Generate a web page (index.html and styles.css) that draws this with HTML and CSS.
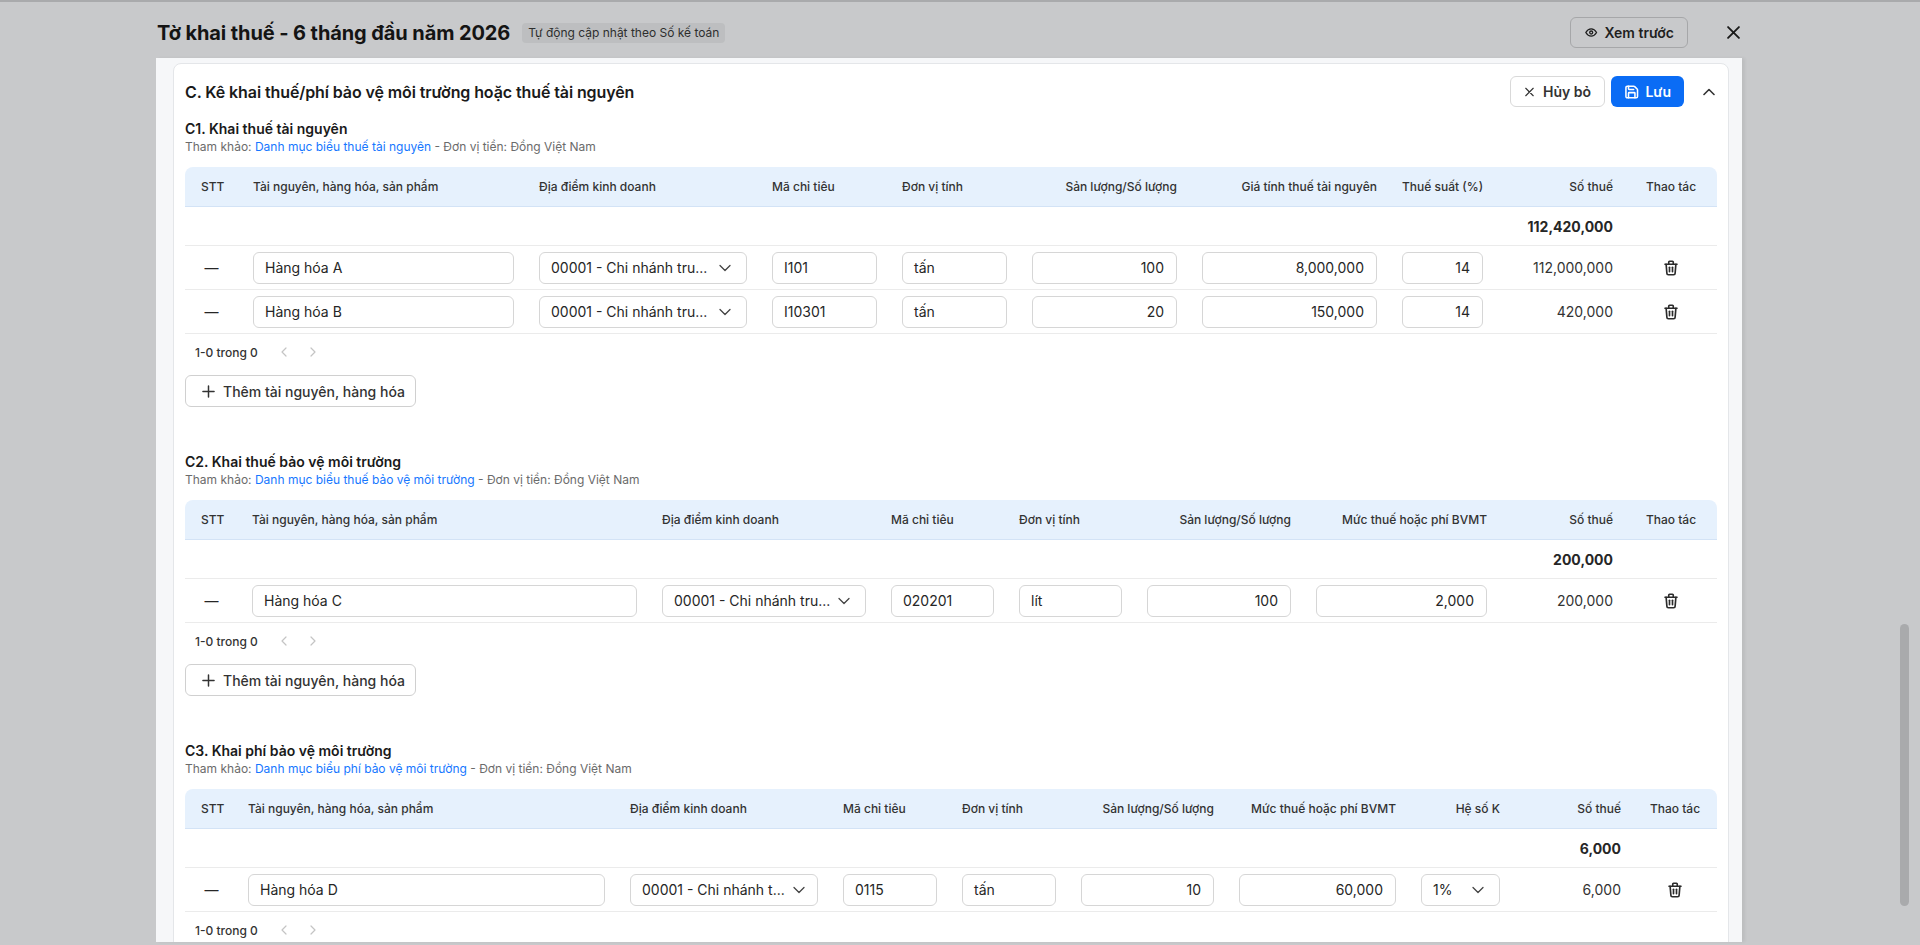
FILE: index.html
```html
<!DOCTYPE html>
<html lang="vi">
<head>
<meta charset="utf-8">
<title>Tờ khai thuế</title>
<link rel="stylesheet" href="styles.css">
</head>
<body>
<div class="modal">
  <header class="modal-head">
    <h1 class="modal-title">Tờ khai thuế - 6 tháng đầu năm 2026</h1>
    <span class="badge">Tự động cập nhật theo Số kế toán</span>
    <div class="spacer"></div>
    <button class="btn btn-ghost">
      <svg class="ic-eye" viewBox="0 0 24 24" fill="none" stroke="currentColor" stroke-width="2.2" stroke-linecap="round" stroke-linejoin="round"><path d="M9.5 12a2.5 2.5 0 1 0 5 0a2.5 2.5 0 0 0 -5 0"/><path d="M21 12c-2.4 4 -5.4 6 -9 6c-3.6 0 -6.6 -2 -9 -6c2.4 -4 5.4 -6 9 -6c3.6 0 6.6 2 9 6"/></svg>
      <span>Xem trước</span>
    </button>
    <button class="close-btn" aria-label="Đóng">
      <svg viewBox="0 0 12 12" width="13" height="13" fill="none" stroke="#1a1a1a" stroke-width="1.7" stroke-linecap="round"><path d="M1 1l10 10M11 1L1 11"/></svg>
    </button>
  </header>

  <div class="panel">
    <section class="card">
      <div class="card-head">
        <h2 class="card-title">C. Kê khai thuế/phí bảo vệ môi trường hoặc thuế tài nguyên</h2>
        <div class="card-actions">
          <button class="btn btn-default">
            <svg viewBox="0 0 12 12" width="12" height="12" fill="none" stroke="currentColor" stroke-width="1.5" stroke-linecap="round"><path d="M1 1l10 10M11 1L1 11"/></svg>
            <span>Hủy bỏ</span>
          </button>
          <button class="btn btn-primary">
            <svg class="ic16" viewBox="0 0 24 24" fill="none" stroke="currentColor" stroke-width="2.4" stroke-linecap="round" stroke-linejoin="round"><path d="M15.2 3a2 2 0 0 1 1.4.6l3.8 3.8a2 2 0 0 1 .6 1.4V19a2 2 0 0 1-2 2H5a2 2 0 0 1-2-2V5a2 2 0 0 1 2-2z"/><path d="M17 21v-7a1 1 0 0 0-1-1H8a1 1 0 0 0-1 1v7"/><path d="M7 3v4a1 1 0 0 0 1 1h7"/></svg>
            <span>Lưu</span>
          </button>
          <button class="collapse-btn" aria-label="Thu gọn">
            <svg viewBox="0 0 12 8" width="12" height="8" fill="none" stroke="#333" stroke-width="1.6" stroke-linecap="round" stroke-linejoin="round"><path d="M1 6.5L6 1.5l5 5"/></svg>
          </button>
        </div>
      </div>

      <!-- C1 -->
      <div class="sub">
        <h3 class="sub-title">C1. Khai thuế tài nguyên</h3>
        <p class="sub-ref">Tham khảo: <a class="link">Danh mục biểu thuế tài nguyên</a> - Đơn vị tiền: Đồng Việt Nam</p>
        <div class="tbl tbl-c1">
          <div class="tr th">
            <div>STT</div>
            <div>Tài nguyên, hàng hóa, sản phẩm</div>
            <div>Địa điểm kinh doanh</div>
            <div>Mã chỉ tiêu</div>
            <div>Đơn vị tính</div>
            <div class="r">Sản lượng/Số lượng</div>
            <div class="r">Giá tính thuế tài nguyên</div>
            <div class="r">Thuế suất (%)</div>
            <div class="r">Số thuế</div>
            <div class="c">Thao tác</div>
          </div>
          <div class="tr total">
            <div></div><div></div><div></div><div></div><div></div><div></div><div></div><div></div>
            <div class="r">112,420,000</div><div></div>
          </div>
          <div class="tr td">
            <div class="dash">—</div>
            <div class="inp">Hàng hóa A</div>
            <div class="sel"><span class="sel-text">00001 - Chi nhánh tru...</span><svg class="chev" viewBox="0 0 12 8" fill="none" stroke="#444" stroke-width="1.3" stroke-linecap="round" stroke-linejoin="round"><path d="M1 1.5l5 5l5-5"/></svg></div>
            <div class="inp">I101</div>
            <div class="inp">tấn</div>
            <div class="inp r">100</div>
            <div class="inp r">8,000,000</div>
            <div class="inp r">14</div>
            <div class="r num">112,000,000</div>
            <div class="c"><svg class="trash" viewBox="0 0 24 24" fill="none" stroke="#2b2b2b" stroke-width="2.2" stroke-linecap="round" stroke-linejoin="round"><path d="M4 7h16"/><path d="M10 11v6"/><path d="M14 11v6"/><path d="M5.5 7l1 12a2 2 0 0 0 2 2h7a2 2 0 0 0 2-2l1-12"/><path d="M9 7V4a1 1 0 0 1 1-1h4a1 1 0 0 1 1 1v3"/></svg></div>
          </div>
          <div class="tr td">
            <div class="dash">—</div>
            <div class="inp">Hàng hóa B</div>
            <div class="sel"><span class="sel-text">00001 - Chi nhánh tru...</span><svg class="chev" viewBox="0 0 12 8" fill="none" stroke="#444" stroke-width="1.3" stroke-linecap="round" stroke-linejoin="round"><path d="M1 1.5l5 5l5-5"/></svg></div>
            <div class="inp">I10301</div>
            <div class="inp">tấn</div>
            <div class="inp r">20</div>
            <div class="inp r">150,000</div>
            <div class="inp r">14</div>
            <div class="r num">420,000</div>
            <div class="c"><svg class="trash" viewBox="0 0 24 24" fill="none" stroke="#2b2b2b" stroke-width="2.2" stroke-linecap="round" stroke-linejoin="round"><path d="M4 7h16"/><path d="M10 11v6"/><path d="M14 11v6"/><path d="M5.5 7l1 12a2 2 0 0 0 2 2h7a2 2 0 0 0 2-2l1-12"/><path d="M9 7V4a1 1 0 0 1 1-1h4a1 1 0 0 1 1 1v3"/></svg></div>
          </div>
        </div>
        <div class="pager">
          <span class="pager-text">1-0 trong 0</span>
          <span class="pager-arrow"><svg viewBox="0 0 6 10" width="6" height="10" fill="none" stroke="#c4c4c4" stroke-width="1.2" stroke-linecap="round" stroke-linejoin="round"><path d="M5 1L1 5l4 4"/></svg></span>
          <span class="pager-arrow"><svg viewBox="0 0 6 10" width="6" height="10" fill="none" stroke="#c4c4c4" stroke-width="1.2" stroke-linecap="round" stroke-linejoin="round"><path d="M1 1l4 4l-4 4"/></svg></span>
        </div>
        <button class="btn btn-add">
          <svg viewBox="0 0 14 14" width="13" height="13" fill="none" stroke="#333" stroke-width="1.6" stroke-linecap="round"><path d="M7 1v12M1 7h12"/></svg>
          <span>Thêm tài nguyên, hàng hóa</span>
        </button>
      </div>

      <!-- C2 -->
      <div class="sub">
        <h3 class="sub-title">C2. Khai thuế bảo vệ môi trường</h3>
        <p class="sub-ref">Tham khảo: <a class="link">Danh mục biểu thuế bảo vệ môi trường</a> - Đơn vị tiền: Đồng Việt Nam</p>
        <div class="tbl tbl-c2">
          <div class="tr th">
            <div>STT</div>
            <div>Tài nguyên, hàng hóa, sản phẩm</div>
            <div>Địa điểm kinh doanh</div>
            <div>Mã chỉ tiêu</div>
            <div>Đơn vị tính</div>
            <div class="r">Sản lượng/Số lượng</div>
            <div class="r">Mức thuế hoặc phí BVMT</div>
            <div class="r">Số thuế</div>
            <div class="c">Thao tác</div>
          </div>
          <div class="tr total">
            <div></div><div></div><div></div><div></div><div></div><div></div><div></div>
            <div class="r">200,000</div><div></div>
          </div>
          <div class="tr td">
            <div class="dash">—</div>
            <div class="inp">Hàng hóa C</div>
            <div class="sel"><span class="sel-text">00001 - Chi nhánh tru...</span><svg class="chev" viewBox="0 0 12 8" fill="none" stroke="#444" stroke-width="1.3" stroke-linecap="round" stroke-linejoin="round"><path d="M1 1.5l5 5l5-5"/></svg></div>
            <div class="inp">020201</div>
            <div class="inp">lít</div>
            <div class="inp r">100</div>
            <div class="inp r">2,000</div>
            <div class="r num">200,000</div>
            <div class="c"><svg class="trash" viewBox="0 0 24 24" fill="none" stroke="#2b2b2b" stroke-width="2.2" stroke-linecap="round" stroke-linejoin="round"><path d="M4 7h16"/><path d="M10 11v6"/><path d="M14 11v6"/><path d="M5.5 7l1 12a2 2 0 0 0 2 2h7a2 2 0 0 0 2-2l1-12"/><path d="M9 7V4a1 1 0 0 1 1-1h4a1 1 0 0 1 1 1v3"/></svg></div>
          </div>
        </div>
        <div class="pager">
          <span class="pager-text">1-0 trong 0</span>
          <span class="pager-arrow"><svg viewBox="0 0 6 10" width="6" height="10" fill="none" stroke="#c4c4c4" stroke-width="1.2" stroke-linecap="round" stroke-linejoin="round"><path d="M5 1L1 5l4 4"/></svg></span>
          <span class="pager-arrow"><svg viewBox="0 0 6 10" width="6" height="10" fill="none" stroke="#c4c4c4" stroke-width="1.2" stroke-linecap="round" stroke-linejoin="round"><path d="M1 1l4 4l-4 4"/></svg></span>
        </div>
        <button class="btn btn-add">
          <svg viewBox="0 0 14 14" width="13" height="13" fill="none" stroke="#333" stroke-width="1.6" stroke-linecap="round"><path d="M7 1v12M1 7h12"/></svg>
          <span>Thêm tài nguyên, hàng hóa</span>
        </button>
      </div>

      <!-- C3 -->
      <div class="sub">
        <h3 class="sub-title">C3. Khai phí bảo vệ môi trường</h3>
        <p class="sub-ref">Tham khảo: <a class="link">Danh mục biểu phí bảo vệ môi trường</a> - Đơn vị tiền: Đồng Việt Nam</p>
        <div class="tbl tbl-c3">
          <div class="tr th">
            <div>STT</div>
            <div>Tài nguyên, hàng hóa, sản phẩm</div>
            <div>Địa điểm kinh doanh</div>
            <div>Mã chỉ tiêu</div>
            <div>Đơn vị tính</div>
            <div class="r">Sản lượng/Số lượng</div>
            <div class="r">Mức thuế hoặc phí BVMT</div>
            <div class="r">Hệ số K</div>
            <div class="r">Số thuế</div>
            <div class="c">Thao tác</div>
          </div>
          <div class="tr total">
            <div></div><div></div><div></div><div></div><div></div><div></div><div></div><div></div>
            <div class="r">6,000</div><div></div>
          </div>
          <div class="tr td">
            <div class="dash">—</div>
            <div class="inp">Hàng hóa D</div>
            <div class="sel"><span class="sel-text">00001 - Chi nhánh t...</span><svg class="chev" viewBox="0 0 12 8" fill="none" stroke="#444" stroke-width="1.3" stroke-linecap="round" stroke-linejoin="round"><path d="M1 1.5l5 5l5-5"/></svg></div>
            <div class="inp">0115</div>
            <div class="inp">tấn</div>
            <div class="inp r">10</div>
            <div class="inp r">60,000</div>
            <div class="sel"><span class="sel-text">1%</span><svg class="chev" viewBox="0 0 12 8" fill="none" stroke="#444" stroke-width="1.3" stroke-linecap="round" stroke-linejoin="round"><path d="M1 1.5l5 5l5-5"/></svg></div>
            <div class="r num">6,000</div>
            <div class="c"><svg class="trash" viewBox="0 0 24 24" fill="none" stroke="#2b2b2b" stroke-width="2.2" stroke-linecap="round" stroke-linejoin="round"><path d="M4 7h16"/><path d="M10 11v6"/><path d="M14 11v6"/><path d="M5.5 7l1 12a2 2 0 0 0 2 2h7a2 2 0 0 0 2-2l1-12"/><path d="M9 7V4a1 1 0 0 1 1-1h4a1 1 0 0 1 1 1v3"/></svg></div>
          </div>
        </div>
        <div class="pager">
          <span class="pager-text">1-0 trong 0</span>
          <span class="pager-arrow"><svg viewBox="0 0 6 10" width="6" height="10" fill="none" stroke="#c4c4c4" stroke-width="1.2" stroke-linecap="round" stroke-linejoin="round"><path d="M5 1L1 5l4 4"/></svg></span>
          <span class="pager-arrow"><svg viewBox="0 0 6 10" width="6" height="10" fill="none" stroke="#c4c4c4" stroke-width="1.2" stroke-linecap="round" stroke-linejoin="round"><path d="M1 1l4 4l-4 4"/></svg></span>
        </div>
      </div>
    </section>
  </div>
</div>
<div class="scroll-thumb"></div>
</body>
</html>
```

FILE: styles.css
```css
* { box-sizing: border-box; }
html, body { margin: 0; padding: 0; }
body {
  width: 1920px;
  height: 945px;
  overflow: hidden;
  background: #c8c9cb;
  border-top: 2px solid #a9aaac;
  font-family: Inter, "Noto Sans", "Liberation Sans", sans-serif;
  color: #262626;
}
button { font-family: inherit; cursor: pointer; }
h1, h2, h3, p { margin: 0; }

.modal {
  margin-left: 156px;
  width: 1586px;
}

.modal-head {
  display: flex;
  align-items: center;
  height: 56px;
  padding: 15px 0 10px 1px;
}
.modal-title {
  font-size: 20px;
  font-weight: 700;
  color: #141414;
  letter-spacing: -0.1px;
  line-height: 28px;
}
.badge {
  margin-left: 12px;
  height: 20px;
  line-height: 20px;
  padding: 0 6px;
  border-radius: 4px;
  background: #bdbec0;
  font-size: 12px;
  color: #2e2e2e;
}
.spacer { flex: 1; }

.btn {
  display: inline-flex;
  align-items: center;
  height: 31px;
  border-radius: 6px;
  font-size: 14px;
  font-weight: 600;
  white-space: nowrap;
}
.ic16 { width: 16px; height: 16px; }
.ic-eye { width: 17px; height: 17px; }
.btn-ghost {
  padding: 0 13px 0 13px;
  gap: 6px;
  width: 118px;
  border: 1px solid #a6a7a9;
  background: transparent;
  color: #1f1f1f;
}
.close-btn {
  margin-left: 33px;
  margin-right: -3px;
  width: 24px;
  height: 24px;
  padding: 0;
  border: 0;
  background: transparent;
  display: flex;
  align-items: center;
  justify-content: center;
}

.panel {
  height: 884px;
  overflow: hidden;
  background: #f6f7f9;
  padding: 5px 13px 0 17px;
  box-shadow: 3px 0 3px rgba(0, 0, 0, 0.06);
}

.card {
  background: #fff;
  border: 1px solid #e4e6e9;
  border-radius: 8px;
  padding: 0 11px 40px;
}
.card-head {
  display: flex;
  align-items: center;
  justify-content: space-between;
  height: 31px;
  margin-top: 12px;
}
.card-title {
  font-size: 16px;
  font-weight: 600;
  color: #1a1a1a;
  letter-spacing: -0.1px;
}
.card-actions {
  display: flex;
  align-items: center;
  gap: 6px;
}
.btn-default {
  width: 95px;
  padding: 0 13px 0 14px;
  gap: 9px;
  border: 1px solid #d9d9d9;
  background: #fff;
  color: #333;
}
.btn-primary {
  width: 73px;
  padding: 0 13px;
  gap: 6px;
  border: 0;
  background: #0a6cf5;
  color: #fff;
}
.collapse-btn {
  margin-left: 7px;
  margin-right: -4px;
  width: 24px;
  height: 24px;
  padding: 0;
  border: 0;
  background: transparent;
  display: flex;
  align-items: center;
  justify-content: center;
}

.sub { margin-top: 12px; }
.sub + .sub { margin-top: 45px; }
.sub-title {
  font-size: 14px;
  font-weight: 600;
  line-height: 20px;
  color: #1a1a1a;
}
.sub-ref {
  font-size: 12px;
  line-height: 16px;
  color: #6b6b6b;
}
.link { color: #1677ff; text-decoration: none; }

.tbl {
  margin-top: 12px;
  width: 1532px;
}
.tr {
  display: grid;
  column-gap: 25px;
  padding: 0 13px 0 16px;
  align-items: center;
  border-bottom: 1px solid #ebebeb;
}
.tbl-c1 .tr { grid-template-columns: 27px 1fr 208px 105px 105px 145px 175px 81px 105px 66px; }
.tbl-c2 .tr { grid-template-columns: 26px 1fr 204px 103px 103px 144px 171px 101px 66px; }
.tbl-c3 .tr { grid-template-columns: 22px 1fr 188px 94px 94px 133px 157px 79px 96px 58px; }

.th {
  height: 40px;
  background: #e6f1fd;
  border-bottom: 1px solid #d3e3f6;
  border-radius: 8px 8px 0 0;
  font-size: 12px;
  font-weight: 500;
  color: #333;
  white-space: nowrap;
}
.total {
  height: 39px;
  font-size: 14px;
  font-weight: 700;
  color: #262626;
}
.td {
  height: 44px;
  font-size: 14px;
}
.r { text-align: right; }
.c { text-align: center; display: flex; justify-content: center; }
.th .c { display: block; }
.dash {
  width: 21px;
  text-align: center;
  font-size: 14px;
  color: #262626;
}
.num { color: #333; }

.inp, .sel {
  height: 32px;
  line-height: 30px;
  border: 1px solid #d6d6d6;
  border-radius: 6px;
  padding: 0 11px;
  background: #fff;
  color: #262626;
  white-space: nowrap;
}
.inp.r { padding: 0 12px; }
.sel {
  display: flex;
  align-items: center;
  gap: 8px;
  padding: 0 15px 0 11px;
}
.sel-text {
  flex: 1;
  white-space: nowrap;
}
.chev { width: 12px; height: 8px; flex: none; }
.trash { width: 18px; height: 18px; }

.pager {
  display: flex;
  align-items: center;
  height: 36px;
  padding-left: 10px;
}
.pager-text {
  font-size: 12px;
  font-weight: 500;
  color: #333;
}
.pager-arrow {
  width: 29px;
  display: flex;
  justify-content: center;
}
.pager-text + .pager-arrow { margin-left: 12px; }

.btn-add {
  margin-top: 5px;
  width: 231px;
  height: 32px;
  padding: 0 0 0 16px;
  gap: 8px;
  border: 1px solid #d0d0d0;
  background: #fff;
  color: #333;
  font-weight: 500;
}

.scroll-thumb {
  position: fixed;
  left: 1900px;
  top: 624px;
  width: 9px;
  height: 282px;
  border-radius: 5px;
  background: #a9aaac;
}
```
